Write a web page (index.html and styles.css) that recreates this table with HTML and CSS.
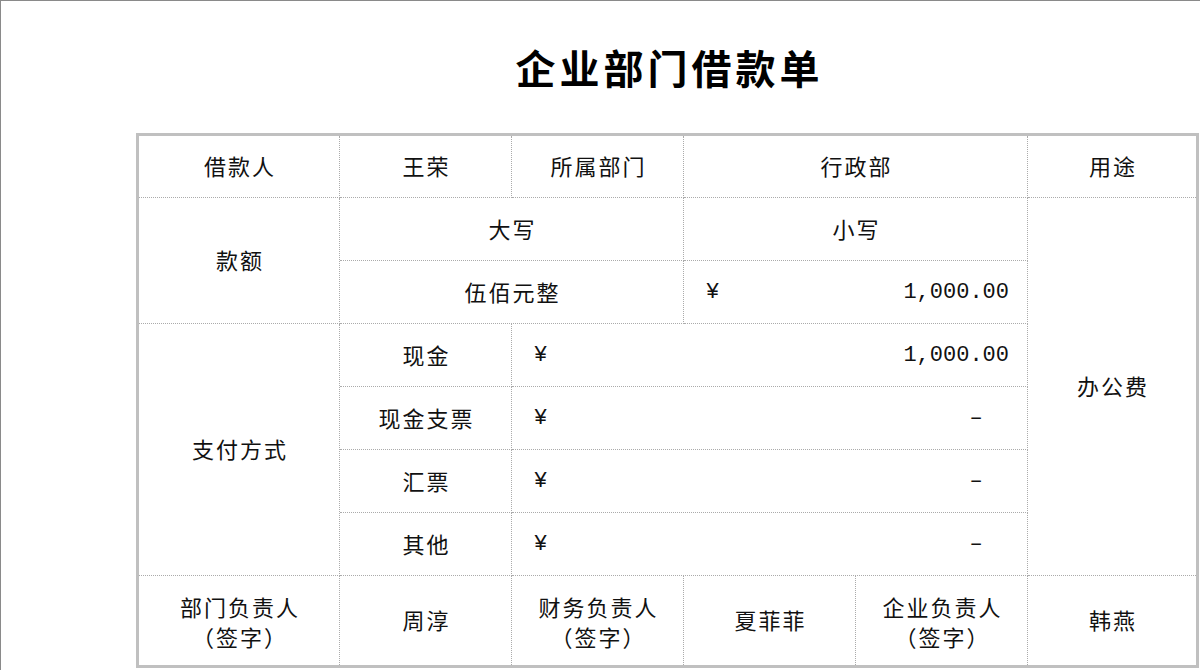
FILE: index.html
```html
<!DOCTYPE html>
<html lang="zh-CN">
<head>
<meta charset="utf-8">
<title>企业部门借款单</title>
<link rel="stylesheet" href="styles.css">
</head>
<body>
<div class="page">
  <h1 class="title">企业部门借款单</h1>
  <div class="form">
    <div class="c">借款人</div>
    <div class="c">王荣</div>
    <div class="c">所属部门</div>
    <div class="c s2">行政部</div>
    <div class="c last">用途</div>

    <div class="c r2">款额</div>
    <div class="c s2">大写</div>
    <div class="c s2">小写</div>
    <div class="c last r6">办公费</div>

    <div class="c s2">伍佰元整</div>
    <div class="c s2 amt"><span class="yen">¥</span><span class="num">1,000.00</span></div>

    <div class="c r4">支付方式</div>
    <div class="c">现金</div>
    <div class="c s3 amt"><span class="yen">¥</span><span class="num">1,000.00</span></div>

    <div class="c">现金支票</div>
    <div class="c s3 amt"><span class="yen">¥</span><span class="num">–  </span></div>

    <div class="c">汇票</div>
    <div class="c s3 amt"><span class="yen">¥</span><span class="num">–  </span></div>

    <div class="c">其他</div>
    <div class="c s3 amt"><span class="yen">¥</span><span class="num">–  </span></div>

    <div class="c bot two"><span>部门负责人</span><span>（签字）</span></div>
    <div class="c bot">周淳</div>
    <div class="c bot two"><span>财务负责人</span><span>（签字）</span></div>
    <div class="c bot">夏菲菲</div>
    <div class="c bot two"><span>企业负责人</span><span>（签字）</span></div>
    <div class="c bot last">韩燕</div>
  </div>
</div>
</body>
</html>
```

FILE: styles.css
```css
html, body {
  margin: 0;
  padding: 0;
  background: #ffffff;
  overflow: hidden;
}

body {
  width: 1200px;
  height: 670px;
  font-family: "Noto Sans CJK SC", "Noto Sans", sans-serif;
  color: #111111;
}

.page {
  box-sizing: border-box;
  width: 1240px;
  height: 700px;
  border-top: 1px solid #8a8a8a;
  border-left: 1px solid #8a8a8a;
  padding: 46px 0 0 135px;
}

.title {
  margin: 0 0 46px 0;
  width: 1063px;
  height: 40px;
  line-height: 40px;
  font-size: 40px;
  font-weight: 700;
  letter-spacing: 4px;
  text-indent: 4px;
  text-align: center;
  color: #000000;
}

.form {
  display: grid;
  grid-template-columns: 201px 172px 172px 172px 172px 168px;
  grid-template-rows: 62px 63px 63px 63px 63px 63px 63px 89px;
  width: max-content;
  border: 3px solid #c0c0c0;
}

.c {
  box-sizing: border-box;
  display: flex;
  align-items: center;
  justify-content: center;
  border-right: 1px dotted #ababab;
  border-bottom: 1px dotted #ababab;
  font-size: 22px;
  letter-spacing: 2px;
  padding: 0 0 3px 2px;
  white-space: nowrap;
}

.last { border-right: none; }
.bot { border-bottom: none; }

.s2 { grid-column: span 2; }
.s3 { grid-column: span 3; }
.r2 { grid-row: span 2; }
.r4 { grid-row: span 4; }
.r6 { grid-row: span 6; }

.two {
  flex-direction: column;
  line-height: 30px;
  padding-top: 4px;
}

.amt {
  justify-content: space-between;
  padding: 0 18px 0 22px;
  font-family: "Liberation Mono", "DejaVu Sans Mono", monospace;
  letter-spacing: 0;
}

.amt .num {
  white-space: pre;
}
```
